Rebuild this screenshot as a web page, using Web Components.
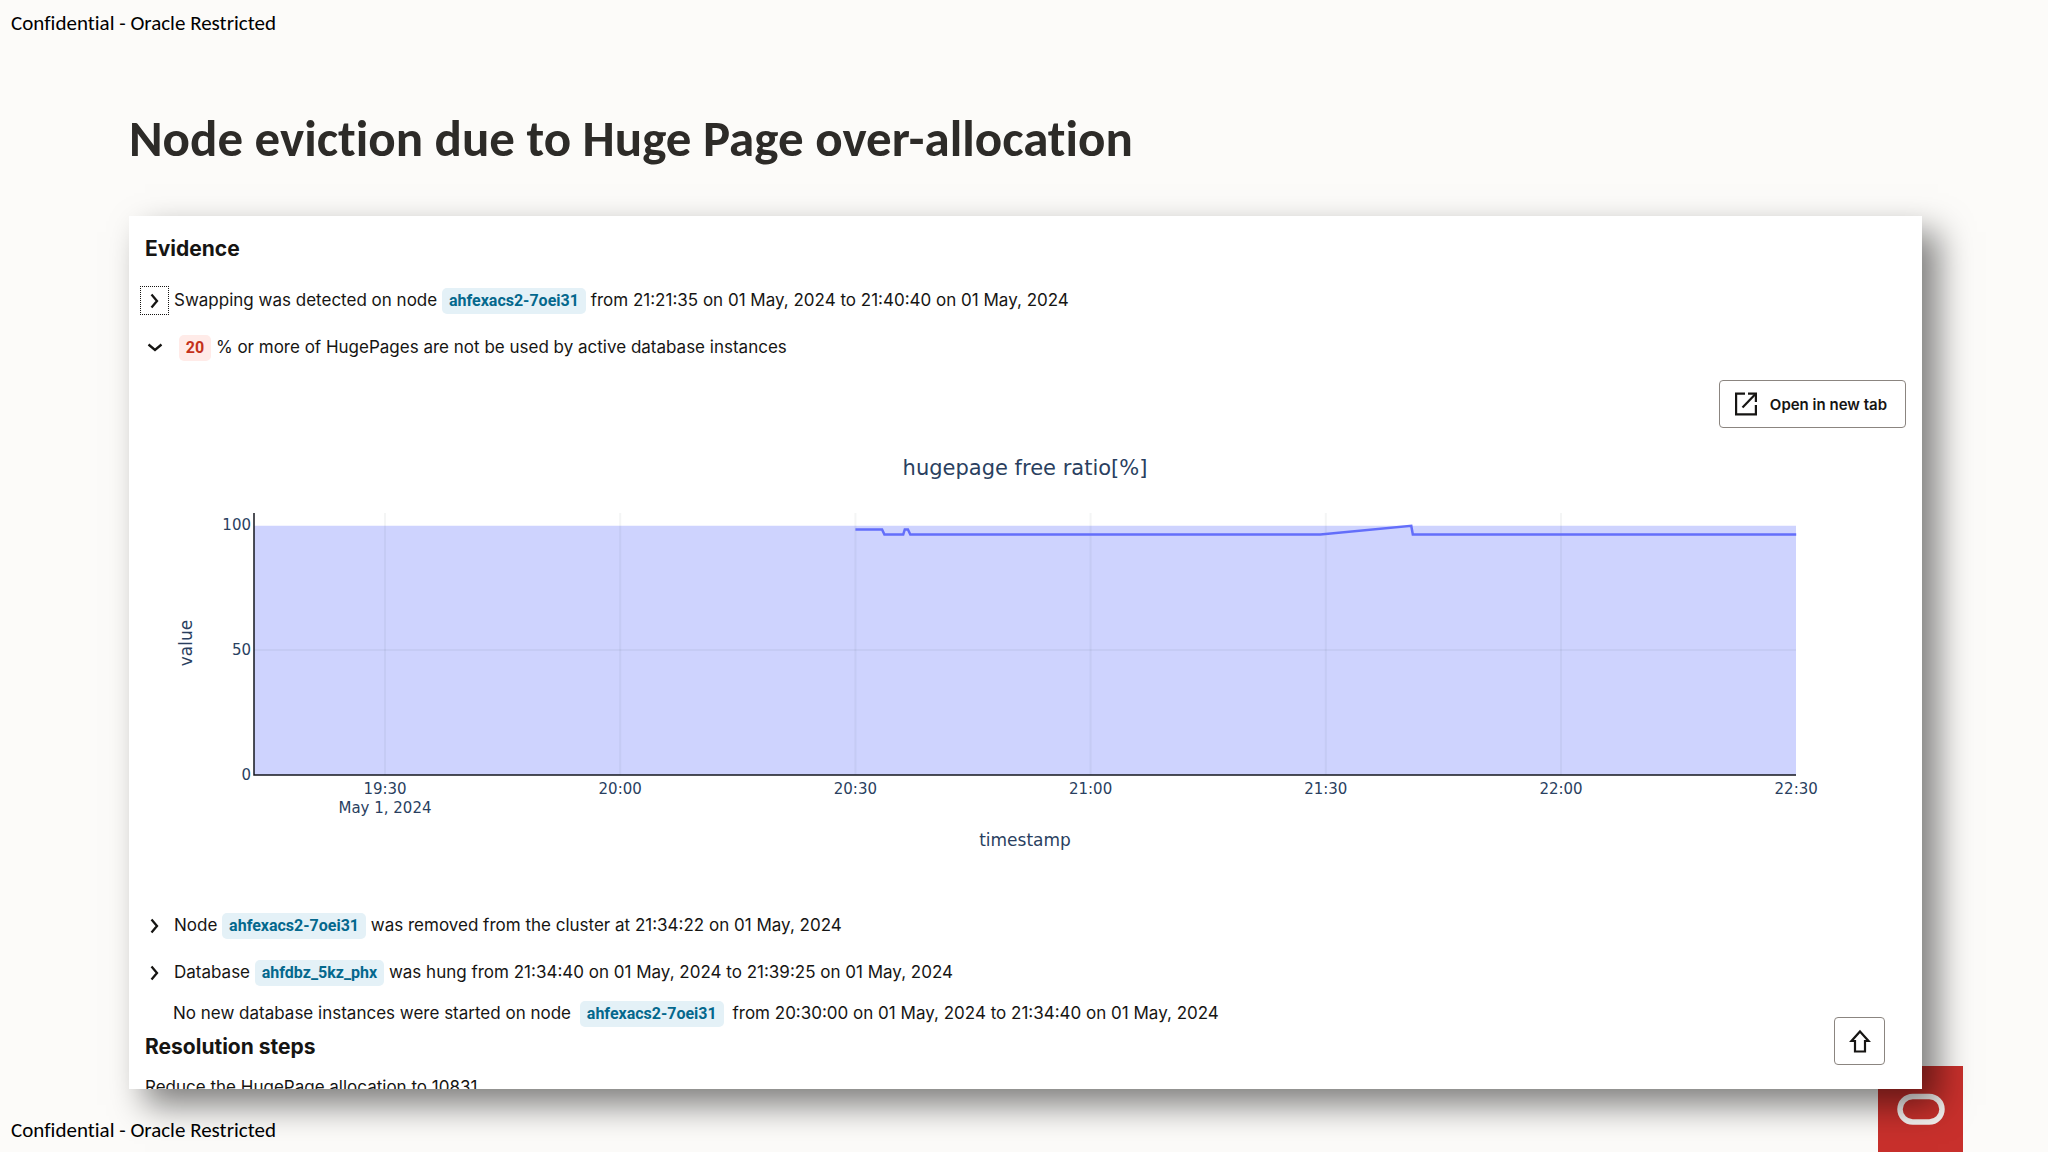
<!DOCTYPE html>
<html lang="en">
<head>
<meta charset="utf-8">
<title>Node eviction due to Huge Page over-allocation</title>
<style>
  body {
    margin: 0;
    background: #fcfbf9;
  }
</style>
</head>
<body>
<slide-page>
  <restricted-note slot="top">Confidential - Oracle Restricted</restricted-note>
  <span slot="title">Node eviction due to Huge Page over-allocation</span>
  <report-panel>
    <section-heading>Evidence</section-heading>
    <evidence-row focused>Swapping was detected on node <value-tag>ahfexacs2-7oei31</value-tag> from 21:21:35 on 01 May, 2024 to 21:40:40 on 01 May, 2024</evidence-row>
    <evidence-row open>&nbsp;<value-tag kind="danger">20</value-tag> % or more of HugePages are not be used by active database instances
      <ratio-chart slot="detail"></ratio-chart>
    </evidence-row>
    <evidence-row>Node <value-tag>ahfexacs2-7oei31</value-tag> was removed from the cluster at 21:34:22 on 01 May, 2024</evidence-row>
    <evidence-row>Database <value-tag>ahfdbz_5kz_phx</value-tag> was hung from 21:34:40 on 01 May, 2024 to 21:39:25 on 01 May, 2024</evidence-row>
    <evidence-note>No new database instances were started on node <value-tag spaced>ahfexacs2-7oei31</value-tag> from 20:30:00 on 01 May, 2024 to 21:34:40 on 01 May, 2024</evidence-note>
    <section-heading>Resolution steps</section-heading>
    <resolution-step>Reduce the HugePage allocation to 10831</resolution-step>
  </report-panel>
  <restricted-note slot="bottom">Confidential - Oracle Restricted</restricted-note>
</slide-page>

<script>
class SlidePage extends HTMLElement {
  constructor() {
    super();
    const shadowRoot = this.attachShadow({ mode: 'open' });
    shadowRoot.innerHTML = `
      <style>
        :host {
          display: flex;
          flex-direction: column;
          position: relative;
          height: 100vh;
          overflow: hidden;
          font-family: Calibri, Carlito, Lato, sans-serif;
          font-variant-ligatures: none;
        }
        header, footer {
          padding: 0 11px;
        }
        header {
          padding-top: 11px;
        }
        h1 {
          margin: 76px 129px 49px;
          font-size: 51px;
          line-height: 56px;
          font-weight: 700;
          color: #2d2b28;
        }
        main {
          display: flex;
          flex: 1;
          min-height: 0;
          padding: 0 126px 0 129px;
          position: relative;
        }
        ::slotted(report-panel) {
          flex: 1;
        }
        footer {
          padding-top: 29px;
          padding-bottom: 10px;
          position: relative;
        }
        brand-mark {
          position: absolute;
          right: 85px;
          bottom: 0;
        }
      </style>
      <brand-mark></brand-mark>
      <header><slot name="top"></slot></header>
      <h1><slot name="title"></slot></h1>
      <main><slot></slot></main>
      <footer><slot name="bottom"></slot></footer>
    `;
  }
}

class RestrictedNote extends HTMLElement {
  constructor() {
    super();
    const shadowRoot = this.attachShadow({ mode: 'open' });
    shadowRoot.innerHTML = `
      <style>
        :host {
          display: block;
          font-size: 21px;
          line-height: 24px;
          color: #000;
        }
      </style>
      <slot></slot>
    `;
  }
}

class BrandMark extends HTMLElement {
  constructor() {
    super();
    const shadowRoot = this.attachShadow({ mode: 'open' });
    shadowRoot.innerHTML = `
      <style>
        :host {
          display: block;
          width: 85px;
          height: 86px;
          background: #c8302c;
        }
        svg {
          display: block;
        }
      </style>
      <svg width="85" height="86" viewBox="0 0 85 86" aria-hidden="true">
        <rect x="22" y="30.5" width="42" height="25.5" rx="12.75" fill="none" stroke="#f5f2f0" stroke-width="5.5"/>
      </svg>
    `;
  }
}

class ReportPanel extends HTMLElement {
  constructor() {
    super();
    const shadowRoot = this.attachShadow({ mode: 'open' });
    shadowRoot.innerHTML = `
      <style>
        :host {
          display: block;
          position: relative;
          min-width: 0;
          background: #fff;
          box-shadow: 16px 16px 32px rgba(0, 0, 0, 0.5);
          font-family: Inter, sans-serif;
          font-size: 17px;
          color: #161513;
          font-variant-ligatures: normal;
        }
        .content {
          height: 100%;
          box-sizing: border-box;
          padding: 17px 16px 0;
          overflow: hidden;
        }
        button {
          position: absolute;
          right: 37px;
          bottom: 24px;
          display: flex;
          align-items: center;
          justify-content: center;
          width: 51px;
          height: 48px;
          padding: 0;
          background: #fff;
          border: 1px solid #8b8580;
          border-radius: 4px;
        }
      </style>
      <div class="content"><slot></slot></div>
      <button type="button" aria-label="Back to top">
        <svg width="24" height="24" viewBox="0 0 24 24" fill="none" stroke="#161513" stroke-width="2.2" aria-hidden="true">
          <path d="M12 2.5 L20.5 12 H17 V22.5 H7 V12 H3.5 Z"/>
        </svg>
      </button>
    `;
  }
}

class SectionHeading extends HTMLElement {
  constructor() {
    super();
    const shadowRoot = this.attachShadow({ mode: 'open' });
    shadowRoot.innerHTML = `
      <style>
        :host {
          display: block;
          margin-bottom: 12px;
        }
        h2 {
          margin: 0;
          font-size: 21px;
          line-height: 32px;
          font-weight: 700;
        }
      </style>
      <h2><slot></slot></h2>
    `;
  }
}

class ValueTag extends HTMLElement {
  constructor() {
    super();
    const shadowRoot = this.attachShadow({ mode: 'open' });
    shadowRoot.innerHTML = `
      <style>
        :host {
          display: inline-block;
          padding: 0 7px;
          border-radius: 5px;
          background: #e4f1f7;
          color: #04688d;
          font-family: Roboto, sans-serif;
          font-size: 16px;
          line-height: 26px;
          font-weight: 700;
        }
        :host([kind="danger"]) {
          background: #ffebe8;
          color: #c4311a;
        }
        :host([spaced]) {
          margin: 0 4px;
        }
      </style>
      <slot></slot>
    `;
  }
}

class EvidenceRow extends HTMLElement {
  constructor() {
    super();
    const shadowRoot = this.attachShadow({ mode: 'open' });
    shadowRoot.innerHTML = `
      <style>
        :host {
          display: block;
        }
        .summary {
          display: flex;
          align-items: center;
          height: 47px;
          gap: 5px;
          margin-left: -5px;
        }
        button {
          display: flex;
          align-items: center;
          justify-content: center;
          width: 29px;
          height: 29px;
          padding: 0;
          border: 1px solid transparent;
          background: none;
        }
        :host([focused]) button {
          border: 1px dotted #161513;
        }
        :host([open]) svg {
          transform: rotate(90deg);
        }
        .detail {
          display: none;
        }
        :host([open]) .detail {
          display: block;
        }
      </style>
      <div class="summary">
        <button type="button" aria-label="Toggle details">
          <svg width="20" height="20" viewBox="0 0 20 20" fill="none" stroke="#161513" stroke-width="2.3" aria-hidden="true">
            <path d="M6.500 3.500 L12 10 L6.500 16.500"/>
          </svg>
        </button>
        <div><slot></slot></div>
      </div>
      <div class="detail"><slot name="detail"></slot></div>
    `;
  }

  connectedCallback() {
    const button = this.shadowRoot.querySelector('button');
    button.setAttribute('aria-expanded', this.hasAttribute('open'));
    button.addEventListener('click', () => {
      this.toggleAttribute('open');
      button.setAttribute('aria-expanded', this.hasAttribute('open'));
    });
  }
}

class EvidenceNote extends HTMLElement {
  constructor() {
    super();
    const shadowRoot = this.attachShadow({ mode: 'open' });
    shadowRoot.innerHTML = `
      <style>
        :host {
          display: block;
          padding-left: 28px;
          line-height: 35px;
        }
      </style>
      <slot></slot>
    `;
  }
}

class ResolutionStep extends HTMLElement {
  constructor() {
    super();
    const shadowRoot = this.attachShadow({ mode: 'open' });
    shadowRoot.innerHTML = `
      <style>
        :host {
          display: block;
          line-height: 24px;
        }
      </style>
      <slot></slot>
    `;
  }
}

class RatioChart extends HTMLElement {
  constructor() {
    super();
    const shadowRoot = this.attachShadow({ mode: 'open' });
    shadowRoot.innerHTML = `
      <style>
        :host {
          display: block;
          padding-top: 9px;
        }
        .toolbar {
          display: flex;
          justify-content: flex-end;
        }
        button {
          display: flex;
          align-items: center;
          gap: 11px;
          height: 48px;
          padding: 0 18px 0 13px;
          background: #fff;
          border: 1px solid #8b8580;
          border-radius: 4px;
          color: #161513;
          font-family: Inter, sans-serif;
          font-size: 15px;
          font-weight: 600;
        }
        .chart {
          display: block;
          width: 100%;
          height: auto;
          font-family: Verdana, "DejaVu Sans", sans-serif;
          font-size: 15px;
          fill: #2a3f5f;
        }
        .title {
          font-size: 21px;
        }
        .axis-title {
          font-size: 17px;
        }
        .grid {
          stroke: #283442;
          stroke-opacity: 0.05;
          stroke-width: 2;
        }
        .area {
          fill: #ced3fe;
        }
        .line {
          fill: none;
          stroke: #636efa;
          stroke-width: 2.5;
        }
        .axis {
          fill: none;
          stroke: #14171f;
          stroke-width: 1.5;
        }
      </style>
      <div class="toolbar">
        <button type="button">
          <svg width="26" height="26" viewBox="0 0 26 26" fill="none" stroke="#161513" stroke-width="2.2" aria-hidden="true">
            <path d="M12 2.6 H3.1 V23.4 H22.9 V14"/>
            <path d="M15 2.6 H22.9 V11"/>
            <path d="M22.5 3 L9.5 16.5"/>
          </svg>
          <span>Open in new tab</span>
        </button>
      </div>
      <svg class="chart" viewBox="0 0 1761 474" role="img" aria-label="hugepage free ratio over time"></svg>
    `;
    this.draw();
  }

  draw() {
    const left = 109, right = 1651, top = 85, bottom = 347;
    const first = 1170;
    // minutes since midnight to the horizontal axis, 19:30 sits at 240
    const x = (minutes) => 240 + (minutes - first) * 235.2 / 30;
    const y = (value) => bottom - value * 2.5;
    const samples = [
      [1230, 98.2], [1233.4, 98.2], [1233.7, 96.2], [1236.1, 96.2],
      [1236.3, 98.2], [1236.7, 98.2], [1237, 96.2], [1289.3, 96.2],
      [1300.9, 99.7], [1301.1, 96.2], [1350, 96.2]
    ];

    let grid = `<path class="grid" d="M${left} ${y(50)} H${right}"/>`;
    let labels = '';
    for (let i = 0; i < 7; i++) {
      const minutes = first + i * 30;
      const time = `${Math.floor(minutes / 60)}:${minutes % 60 ? '30' : '00'}`;
      if (i < 6) {
        grid += `<path class="grid" d="M${x(minutes)} ${top} V${bottom}"/>`;
      }
      labels += `<text x="${x(minutes)}" y="366" text-anchor="middle">${time}</text>`;
    }
    for (const value of [0, 50, 100]) {
      labels += `<text x="106" y="${y(value) + 5}" text-anchor="end">${value}</text>`;
    }

    const points = samples.map(([m, v]) => `${x(m)},${y(v)}`).join(' ');
    this.shadowRoot.querySelector('.chart').innerHTML = `
      <rect class="area" x="${left}" y="${y(99.7)}" width="${right - left}" height="${bottom - y(99.7)}"/>
      ${grid}
      <polyline class="line" points="${points}"/>
      <path class="axis" d="M${left} ${top} V${bottom} H${right}"/>
      ${labels}
      <text x="240" y="385" text-anchor="middle">May 1, 2024</text>
      <text class="title" x="880" y="47" text-anchor="middle">hugepage free ratio[%]</text>
      <text class="axis-title" x="880" y="418" text-anchor="middle">timestamp</text>
      <text class="axis-title" transform="translate(47 215) rotate(-90)" text-anchor="middle">value</text>
    `;
  }
}

customElements.define('brand-mark', BrandMark);
customElements.define('restricted-note', RestrictedNote);
customElements.define('section-heading', SectionHeading);
customElements.define('value-tag', ValueTag);
customElements.define('evidence-row', EvidenceRow);
customElements.define('evidence-note', EvidenceNote);
customElements.define('resolution-step', ResolutionStep);
customElements.define('ratio-chart', RatioChart);
customElements.define('report-panel', ReportPanel);
customElements.define('slide-page', SlidePage);
</script>
</body>
</html>
